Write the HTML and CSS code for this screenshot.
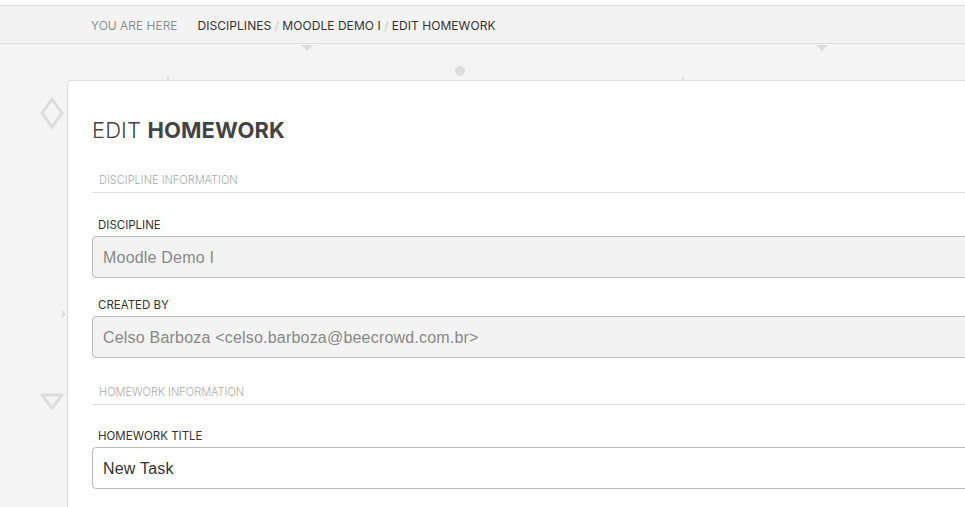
FILE: index.html
```html
<!DOCTYPE html>
<html>
<head>
<meta charset="utf-8">
<link rel="stylesheet" href="styles.css">
</head>
<body>
<div class="topgap"></div>
<nav class="crumbs">
  <span class="here">YOU ARE HERE</span>
  <span class="path">DISCIPLINES <span class="sep">/</span> MOODLE DEMO I <span class="sep">/</span> EDIT HOMEWORK</span>
</nav>
<div class="stage">
  <svg class="decor" width="965" height="470" viewBox="0 0 965 470">
    <polygon points="301,1 313,1 307,7" fill="#dcdcdc"/>
    <polygon points="816,1 828,1 822,7" fill="#dcdcdc"/>
    <circle cx="460" cy="27" r="5" fill="#dcdcdc"/>
    <rect x="167" y="33" width="2" height="3" fill="#dcdcdc"/>
    <rect x="682" y="33" width="2" height="3" fill="#dcdcdc"/>
    <polygon points="52,55 62,69 52,83 42,69" fill="none" stroke="#dcdcdc" stroke-width="3"/>
    <polygon points="42,351 62,351 52,364" fill="none" stroke="#dcdcdc" stroke-width="3" stroke-linejoin="miter"/>
    <polygon points="62,266 66,270 62,274" fill="#dcdcdc"/>
  </svg>
  <main class="card">
    <h1 class="title"><span class="light">EDIT</span> <b>HOMEWORK</b></h1>
    <div class="section">DISCIPLINE INFORMATION</div>
    <div class="field">
      <label>DISCIPLINE</label>
      <div class="input disabled">Moodle Demo I</div>
    </div>
    <div class="field">
      <label>CREATED BY</label>
      <div class="input disabled">Celso Barboza &lt;celso.barboza@beecrowd.com.br&gt;</div>
    </div>
    <div class="section sec2">HOMEWORK INFORMATION</div>
    <div class="field">
      <label>HOMEWORK TITLE</label>
      <div class="input">New Task</div>
    </div>
  </main>
</div>
</body>
</html>
```
FILE: styles.css
```css
html, body {
  margin: 0;
  padding: 0;
}
body {
  background: #f4f4f4;
  font-family: Inter, "Open Sans", sans-serif;
  overflow: hidden;
  width: 965px;
  height: 507px;
}
.topgap {
  height: 5px;
  background: #fff;
}
.crumbs {
  box-sizing: content-box;
  border-top: 1px solid #dcdcdc;
  border-bottom: 1px solid #dcdcdc;
  background: #f3f3f3;
  display: flex;
  align-items: center;
  padding: 2px 0 0 91px;
  height: 35px;
  font-size: 12px;
  letter-spacing: 0.05px;
}
.here {
  color: #777;
  font-weight: 300;
  margin-right: 20px;
}
.path {
  color: #333;
  font-weight: 400;
}
.sep {
  color: #bbb;
  font-weight: 300;
}
.stage {
  position: relative;
  padding: 36px 0 0 67px;
}
.decor {
  position: absolute;
  left: 0;
  top: 0;
}
.card {
  position: relative;
  background: #fff;
  border-left: 1px solid #dcdcdc;
  border-top: 1px solid #dcdcdc;
  border-top-left-radius: 4px;
  padding: 36px 0 40px 24px;
  margin-right: -20px;
}
.title {
  margin: 0 0 30px 0;
  font-size: 22px;
  line-height: 26px;
  color: #444;
  font-weight: 400;
  letter-spacing: 0.1px;
}
.title .light {
  font-weight: 300;
}
.title b {
  font-weight: 700;
}
.section {
  font-size: 11px;
  line-height: 14px;
  color: #aaa;
  font-weight: 300;
  padding: 0 0 5px 7px;
  border-bottom: 1px solid #dcdcdc;
  margin-bottom: 25px;
}
.sec2 {
  margin-top: 27px;
  margin-bottom: 24px;
}
.field label {
  display: block;
  font-size: 11.5px;
  line-height: 14px;
  color: #333;
  font-weight: 400;
  padding-left: 6px;
  margin-bottom: 4px;
}
.field + .field {
  margin-top: 20px;
}
.input {
  height: 40px;
  box-sizing: content-box;
  border: 1px solid #bbb;
  border-radius: 4px;
  background: #fff;
  display: flex;
  align-items: center;
  padding: 1px 0 0 10px;
  height: 39px;
  font-family: "Liberation Sans", Arial, sans-serif;
  font-size: 16px;
  letter-spacing: 0.2px;
  color: #333;
}
.input.disabled {
  background: #f3f3f3;
  color: #888;
}
```
